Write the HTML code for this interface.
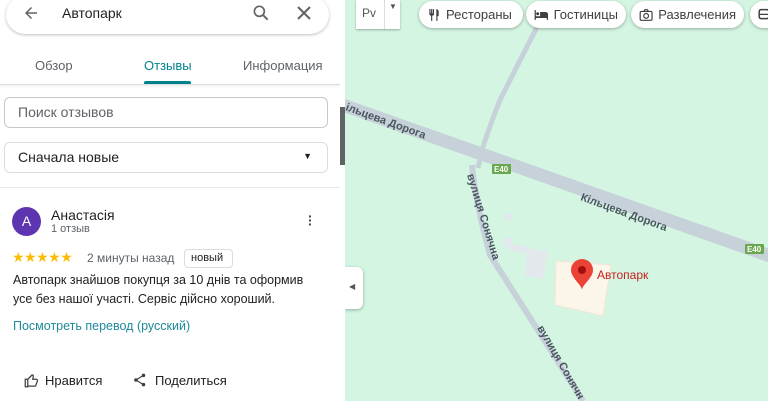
<!DOCTYPE html>
<html><head><meta charset="utf-8"><style>
*{margin:0;padding:0;box-sizing:border-box}
body{width:768px;height:401px;overflow:hidden;position:relative;font-family:"Liberation Sans",Roboto,sans-serif;background:#fff;color:#202124}
.abs{position:absolute}
#panel{left:0;top:0;width:345px;height:401px;background:#fff}
.tab{top:58px;font-size:13px;color:#5f6368}
.btn{background:#fff;border-radius:14px;box-shadow:0 1px 3px rgba(0,0,0,.3);height:27px;top:1px;font-size:13px;display:flex;align-items:center;padding:0 8px;gap:5px;color:#3c4043;white-space:nowrap;overflow:hidden}
</style></head><body>
<svg class="abs" style="left:0;top:0" width="768" height="401">
<rect x="345" y="0" width="423" height="401" fill="#d3f5e1"/>
<path d="M538,25 L500,100 Q490,125 482,150 L478,168" stroke="#c7d1d9" stroke-width="5" fill="none"/>
<path d="M472,165 Q475,200 490,255 L583,401" stroke="#c7d1d9" stroke-width="6" fill="none"/>
<path d="M340,104 L770,256" stroke="#c7d1d9" stroke-width="13" fill="none"/>
<rect x="505" y="214" width="8" height="7" fill="#e3e8ec"/>
<rect x="503" y="238" width="9" height="9" fill="#e3e8ec"/>
<polygon points="511,244 528,247 527,254 510,251" fill="#e3e8ec"/>
<polygon points="527,248 548,251 543,279 525,276" fill="#e3e8ec"/>
<polygon points="556,261 611,265 603,316 555,305" fill="#fcf6ea" stroke="#f0e6d4"/>
<rect x="492" y="164" width="19" height="10" fill="#6aa84f" rx="1"/>
<text x="494" y="172" font-size="8" fill="#fff" font-weight="bold">E40</text>
<rect x="745" y="244" width="19" height="10" fill="#6aa84f" rx="1"/>
<text x="747" y="252" font-size="8" fill="#fff" font-weight="bold">E40</text>
<g font-size="11" fill="#4a5560" font-weight="bold">
<text transform="translate(345,110) rotate(20)">ільцева Дорога</text>
<text transform="translate(580,200) rotate(20)">Кільцева Дорога</text>
<text transform="translate(467,175) rotate(73)">вулиця Сонячна</text>
<text transform="translate(537,328) rotate(60)">вулиця Сонячн</text>
</g>
<path d="M582,259 a11,11 0 0 1 11,11 c0,8 -11,15 -11,20 c0,-5 -11,-12 -11,-20 a11,11 0 0 1 11,-11z" fill="#ea4335"/>
<circle cx="582" cy="270" r="4" fill="#a50e0e"/>
<text x="597" y="279" font-size="12" fill="#c5221f">Автопарк</text>
</svg>
<div class="abs" style="left:356px;top:0;width:44px;height:29px;background:#fff;box-shadow:0 1px 2px rgba(0,0,0,.3);font-size:12px;color:#555;padding:6px 0 0 6px">Pv<span style="position:absolute;left:28px;top:0;width:1px;height:29px;background:#ddd"></span><span style="position:absolute;left:33px;top:2px;font-size:8px">▼</span></div>
<div class="abs btn" style="left:419px;width:104px"><svg width="14" height="14" viewBox="0 0 24 24"><path d="M4 2v8a3 3 0 0 0 3 3v9h2v-9a3 3 0 0 0 3-3V2h-2v7H9V2H7v7H6V2zM16 2v20h2v-8h2V6a4 4 0 0 0-4-4z" fill="#3c4043"/></svg>Рестораны</div>
<div class="abs btn" style="left:526px;width:100px"><svg width="16" height="14" viewBox="0 0 24 20"><path d="M1 2h2v10h7V5h9a4 4 0 0 1 4 4v9h-2v-3H3v3H1z" fill="#3c4043"/><circle cx="6" cy="8" r="2.5" fill="#3c4043"/></svg>Гостиницы</div>
<div class="abs btn" style="left:631px;width:113px"><svg width="15" height="14" viewBox="0 0 24 22"><rect x="2" y="5" width="20" height="15" rx="2" stroke="#3c4043" stroke-width="2" fill="none"/><path d="M8 5l2-3h4l2 3" stroke="#3c4043" stroke-width="2" fill="none"/><circle cx="12" cy="12.5" r="4" stroke="#3c4043" stroke-width="2" fill="none"/></svg>Развлечения</div>
<div class="abs btn" style="left:750px;width:40px"><svg width="12" height="14" viewBox="0 0 20 22"><rect x="2" y="2" width="16" height="15" rx="3" stroke="#3c4043" stroke-width="2.5" fill="none"/><path d="M2 10h16" stroke="#3c4043" stroke-width="2"/></svg></div>
<div class="abs" style="left:345px;top:267px;width:18px;height:42px;background:#fff;border-radius:0 6px 6px 0;box-shadow:0 1px 3px rgba(0,0,0,.3);font-size:8px;color:#555;padding:15px 0 0 4px">◀</div>

<div id="panel" class="abs">
<div class="abs" style="left:6px;top:-4px;width:323px;height:38px;border-radius:19px;box-shadow:0 1px 3px rgba(0,0,0,.25)"></div>
<svg class="abs" style="left:22px;top:4px" width="18" height="18" viewBox="0 0 24 24"><path d="M20 11H7.8l5.6-5.6L12 4l-8 8 8 8 1.4-1.4L7.8 13H20z" fill="#5f6368"/></svg>
<div class="abs" style="left:62px;top:5px;font-size:14px">Автопарк</div>
<svg class="abs" style="left:251px;top:3px" width="20" height="20" viewBox="0 0 24 24"><circle cx="10" cy="10" r="6" stroke="#5f6368" stroke-width="2" fill="none"/><path d="M14.5 14.5L20 20" stroke="#5f6368" stroke-width="2.2"/></svg>
<svg class="abs" style="left:296px;top:5px" width="16" height="16" viewBox="0 0 16 16"><path d="M2 2L14 14M14 2L2 14" stroke="#5f6368" stroke-width="2"/></svg>
<div class="abs tab" style="left:35px">Обзор</div>
<div class="abs tab" style="left:144px;color:#00838f">Отзывы</div>
<div class="abs tab" style="left:243px">Информация</div>
<div class="abs" style="left:144px;top:81px;width:47px;height:3px;background:#00838f;border-radius:2px 2px 0 0"></div>
<div class="abs" style="left:0;top:84px;width:340px;height:1px;background:#ddd;box-shadow:0 1px 2px rgba(0,0,0,.15)"></div>
<div class="abs" style="left:4px;top:97px;width:324px;height:31px;border:1px solid #c8c8c8;border-radius:6px;font-size:14px;color:#5f6368;padding:6px 13px">Поиск отзывов</div>
<div class="abs" style="left:4px;top:142px;width:324px;height:31px;border:1px solid #dadce0;border-radius:6px;font-size:14px;padding:6px 13px">Сначала новые<span style="position:absolute;right:15px;top:8px;font-size:9px">▼</span></div>
<div class="abs" style="left:0;top:187px;width:340px;height:1px;background:#e8eaed"></div>
<div class="abs" style="left:340px;top:107px;width:5px;height:58px;background:#5f6368"></div>
<div class="abs" style="left:12px;top:207px;width:29px;height:29px;border-radius:50%;background:#5e35b1;color:#fff;font-size:14px;text-align:center;line-height:29px">A</div>
<div class="abs" style="left:51px;top:207px;font-size:14px">Анастасія</div>
<div class="abs" style="left:51px;top:223px;font-size:11px;color:#5f6368">1 отзыв</div>
<div class="abs" style="left:308px;top:214px;font-size:14px;font-weight:bold;line-height:4px;color:#444">·<br>·<br>·</div>
<div class="abs" style="left:12px;top:249px;font-size:14px;color:#fbbc04;letter-spacing:-0.5px">★★★★★</div>
<div class="abs" style="left:87px;top:251px;font-size:12px;color:#5f6368">2 минуты назад</div>
<div class="abs" style="left:184px;top:249px;width:49px;height:19px;border:1px solid #dadce0;border-radius:4px;font-size:11px;padding:2px 6px">новый</div>
<div class="abs" style="left:13px;top:271px;font-size:12.5px;line-height:19px;width:330px">Автопарк знайшов покупця за 10 днів та оформив<br>усе без нашої участі. Сервіс дійсно хороший.</div>
<div class="abs" style="left:13px;top:319px;font-size:12.5px;color:#1e8a9a">Посмотреть перевод (русский)</div>
<svg class="abs" style="left:24px;top:373px" width="15" height="15" viewBox="0 0 24 24"><path d="M2 10h4v12H2zM6 21h11a2 2 0 0 0 2-1.5l2.5-7A2 2 0 0 0 19.5 10H14l1-5a2 2 0 0 0-2-2L6 10" stroke="#3c4043" stroke-width="2" fill="none"/></svg>
<div class="abs" style="left:45px;top:373px;font-size:13px">Нравится</div>
<svg class="abs" style="left:133px;top:373px" width="14" height="14" viewBox="0 0 24 24"><circle cx="18" cy="4" r="3" fill="#3c4043"/><circle cx="5" cy="12" r="3" fill="#3c4043"/><circle cx="18" cy="20" r="3" fill="#3c4043"/><path d="M18 4L5 12L18 20" stroke="#3c4043" stroke-width="2" fill="none"/></svg>
<div class="abs" style="left:155px;top:373px;font-size:13px">Поделиться</div>
</div>
</body></html>
